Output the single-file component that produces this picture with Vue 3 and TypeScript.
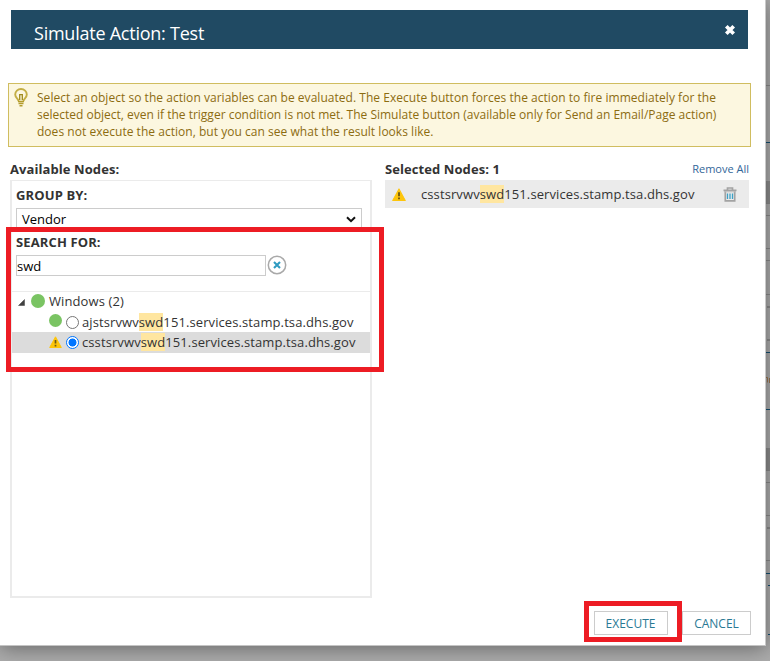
<script setup lang="ts">
import { ref } from 'vue'

interface TreeNode {
  id: number
  status: 'up' | 'warning'
  before: string
  match: string
  after: string
}

const nodes: TreeNode[] = [
  { id: 1, status: 'up', before: 'ajstsrvwv', match: 'swd', after: '151.services.stamp.tsa.dhs.gov' },
  { id: 2, status: 'warning', before: 'csstsrvwv', match: 'swd', after: '151.services.stamp.tsa.dhs.gov' },
]
const selectedId = ref(2)
const search = ref('swd')

const ruleLines = [85, 203, 215, 248, 260, 294, 470, 482, 515, 560]
const accentLines = [142, 352, 409, 573]
</script>

<template>
  <div class="screen">
    <svg class="behind" width="4" height="661" viewBox="0 0 4 661">
      <rect y="181" width="4" height="23" fill="#8d8d8d" />
      <rect y="448" width="4" height="23" fill="#8d8d8d" />
      <rect v-for="y in ruleLines" :key="y" :y="y" width="4" height="1" fill="#8a8a8a" />
      <rect x="1" y="306" width="3" height="2" fill="#8b8b8b" />
      <rect x="1" y="339" width="3" height="2" fill="#8b8b8b" />
      <rect x="1" y="527" width="3" height="2" fill="#8b8b8b" />
      <rect v-for="y in accentLines" :key="y" :y="y" width="4" height="1" fill="#144f71" />
      <rect x="2" y="585" width="2" height="1" fill="#144f71" />
      <rect x="2" y="634" width="2" height="1" fill="#144f71" />
      <path d="M0 377.5h1.500v5M3.500 378v5" fill="none" stroke="#9b7650" />
    </svg>

    <section class="dialog">
      <header class="titlebar">
        <h1>Simulate Action: Test</h1>
        <svg class="close" width="12" height="12" viewBox="0 0 12 12">
          <path d="M2.300 2.300l7.400 7.400M9.700 2.300l-7.400 7.400" stroke="#fff" stroke-width="3.700" />
        </svg>
      </header>

      <div class="hint">
        <svg class="bulb" width="14" height="20" viewBox="0 0 14 20" fill="none">
          <path d="M4.500 13.200C4.500 10.500 1.200 10 1.200 6.500a5.800 5.500 0 0 1 11.600 0C12.800 10 9.500 10.500 9.500 13.200" stroke="#c3ae45" stroke-width="1.900" />
          <path d="M5.700 12V6.600h2.600V12" stroke="#a08a1c" stroke-width="1.300" />
          <path d="M4 13.500h6M4.500 15.500h5M5.500 17.700h3" stroke="#b39c2c" stroke-width="1.600" />
        </svg>
        <p>
          <span class="l1">Select an object so the action variables can be evaluated. The Execute button forces the action to fire immediately for the</span><br>
          <span class="l2">selected object, even if the trigger condition is not met. The Simulate button (available only for Send an Email/Page action)</span><br>
          <span class="l3">does not execute the action, but you can see what the result looks like.</span>
        </p>
      </div>

      <div class="columns">
        <div class="available">
          <h2>Available Nodes:</h2>
          <div class="panel">
            <div class="filters">
              <label class="caption">GROUP BY:</label>
              <div class="select">
                <span>Vendor</span>
                <svg width="10" height="7" viewBox="0 0 10 7"><path d="M1 1.200l4 4 4-4" fill="none" stroke="#111" stroke-width="2" /></svg>
              </div>
              <label class="caption second">SEARCH FOR:</label>
              <div class="search">
                <input v-model="search" type="text">
                <svg width="20" height="20" viewBox="0 0 20 20">
                  <circle cx="10" cy="10" r="8.700" fill="#fff" stroke="#a9a9a9" stroke-width="1.500" />
                  <path d="M7 7l6 6M13 7l-6 6" stroke="#2f9bc1" stroke-width="2.100" />
                </svg>
              </div>
            </div>
            <div class="tree">
              <div class="group">
                <svg class="arrow" width="7" height="7" viewBox="0 0 7 7"><path d="M6.500 .5v6h-6z" fill="#404040" stroke="#404040" stroke-width=".5" /></svg>
                <i class="dot big"></i>
                <span class="group-name">Windows (2)</span>
              </div>
              <div v-for="n in nodes" :key="n.id" class="leaf" :class="{ chosen: n.id === selectedId }" @click="selectedId = n.id">
                <span class="status">
                  <i v-if="n.status === 'up'" class="dot"></i>
                  <svg v-else width="13" height="12" viewBox="0 0 13 12">
                    <path d="M6.500 .8L12.300 11.500H.7z" fill="#fdc50c" stroke="#fdc50c" stroke-linejoin="round" />
                    <path d="M6.500 4v3.600M6.500 8.700v1.700" stroke="#6d5812" stroke-width="1.700" />
                  </svg>
                </span>
                <i class="radio"></i>
                <span class="name">{{ n.before }}<mark>{{ n.match }}</mark>{{ n.after }}</span>
              </div>
            </div>
          </div>
        </div>

        <div class="selected">
          <div class="selected-head">
            <h2>Selected Nodes: 1</h2>
            <a>Remove All</a>
          </div>
          <div class="picked">
            <svg width="14" height="13" viewBox="0 0 13 12">
              <path d="M6.500 .8L12.300 11.500H.7z" fill="#fdc50c" stroke="#fdc50c" stroke-linejoin="round" />
              <path d="M6.500 4v3.600M6.500 8.700v1.700" stroke="#6d5812" stroke-width="1.700" />
            </svg>
            <span class="name">csstsrvwv<mark>swd</mark>151.services.stamp.tsa.dhs.gov</span>
            <svg class="trash" width="14" height="15" viewBox="0 0 14 15" fill="none">
              <path d="M4.500 2.500V1h5v1.500M.5 3.300h13M2.300 4v9.800h9.400V4" stroke="#a3a3a3" stroke-width="1.700" />
              <path d="M1.500 4.800h11" stroke="#bcbcbc" />
              <path d="M4.500 6.500v5.500M7 6.500v5.500M9.500 6.500v5.500" stroke="#3da1c6" stroke-width="1.300" />
            </svg>
          </div>
        </div>
      </div>

      <footer class="actions">
        <button class="execute">EXECUTE</button>
        <button class="cancel">CANCEL</button>
      </footer>
    </section>

    <div class="mark-box search-mark"></div>
    <div class="mark-box execute-mark"></div>
  </div>
</template>

<style>
body { margin: 0; overflow: hidden; }
</style>

<style scoped>
* { box-sizing: border-box; }
.screen {
  position: relative;
  width: 770px;
  height: 661px;
  overflow: hidden;
  background: #acacac;
  font-family: "Open Sans", "Noto Sans", sans-serif;
  font-size: 13px;
  color: #333;
}
.behind { position: absolute; left: 766px; top: 0; }
.dialog {
  position: relative;
  display: flex;
  flex-direction: column;
  width: 766px;
  height: 646px;
  padding: 10px 0 10px;
  background: #fff;
  border-right: 1px solid #c9c9c9;
  border-bottom: 1px solid #c4c4c4;
  box-shadow: 0 2px 20px rgba(0, 0, 0, .42);
}
.titlebar {
  display: flex;
  justify-content: space-between;
  width: 737px;
  height: 39px;
  margin-left: 11px;
  padding: 0 12px 0 23px;
  background: #204a63;
}
h1 {
  margin: 0;
  padding-top: 8px;
  font-size: 18px;
  line-height: 30px;
  font-weight: 400;
  letter-spacing: -.24px;
  color: #fff;
  white-space: nowrap;
}
.close { margin-top: 14px; }
.hint {
  display: flex;
  width: 743px;
  height: 64px;
  margin: 34px 0 0 8px;
  padding: 4px 0 0 5px;
  border: 1px solid #d0bd60;
  background: #fcf7e0;
  color: #8c6c10;
}
.bulb { flex: none; }
.hint p {
  margin: 1px 0 0 9px;
  font-size: 12px;
  line-height: 17px;
  white-space: nowrap;
}
.l1 { letter-spacing: .036px; }
.l3 { letter-spacing: .03px; }
.columns {
  display: flex;
  margin: 13px 0 0 10px;
}
h2 {
  margin: 0;
  font-size: 13px;
  line-height: 18px;
  font-weight: 700;
  letter-spacing: .08px;
  color: #333;
  white-space: nowrap;
}
.available { width: 375px; }
.panel {
  width: 362px;
  height: 418px;
  margin-top: 2px;
  border: 2px solid #ebebeb;
  border-top-width: 1px;
}
.filters { height: 110px; padding: 5px 0 0 4px; }
.caption {
  display: block;
  height: 22px;
  font-size: 13px;
  line-height: 18px;
  font-weight: 700;
  letter-spacing: .12px;
}
.select {
  display: flex;
  align-items: center;
  justify-content: space-between;
  width: 346px;
  height: 22px;
  padding: 0 5px 0 5px;
  border: 1px solid #ccc;
  color: #000;
}
.second { height: 22px; margin-top: 3px; }
.search { display: flex; gap: 1px; }
input {
  width: 250px;
  height: 21px;
  padding: 0;
  border: 1px solid #ccc;
  font: inherit;
  color: #000;
  outline: none;
}
.tree { border-top: 1px solid #ebebeb; }
.group {
  display: flex;
  align-items: center;
  height: 20px;
  padding-left: 6px;
  white-space: nowrap;
}
.group-name { margin-top: -2px; letter-spacing: .1px; }
.arrow { margin-top: 1px; }
.dot {
  display: block;
  width: 13px;
  height: 13px;
  border-radius: 50%;
  background: #7ac463;
}
.dot.big { width: 14px; height: 14px; margin: -3px 4px 0 6px; }
.leaf {
  display: flex;
  align-items: center;
  height: 20px;
  padding-left: 37px;
  white-space: nowrap;
}
.leaf.chosen { height: 21px; background: #dcdcdc; }
.chosen .name { margin-top: -1px; }
.chosen .status { margin-top: -1px; }
.status { display: flex; width: 17px; }
.leaf .dot { margin-top: -3px; }
.radio {
  width: 13px;
  height: 13px;
  margin-right: 3px;
  border: 1px solid #767676;
  border-radius: 50%;
  background: #fff;
}
.chosen .radio {
  border-color: #0075ff;
  background: radial-gradient(circle, #0075ff 0 3.700px, #fff 4.300px);
}
.name { letter-spacing: .1px; }
mark { padding: 0; background: #ffe6a0; color: inherit; }
.selected { width: 364px; }
.selected-head { display: flex; justify-content: space-between; }
.selected-head a { font-size: 11px; line-height: 18px; color: #336699; }
.picked {
  display: flex;
  align-items: center;
  height: 28px;
  margin-top: 2px;
  padding: 0 12px 0 7px;
  background: #ebebeb;
  white-space: nowrap;
}
.picked .name { margin-left: 15px; }
.trash { margin-left: auto; }
.actions {
  display: flex;
  justify-content: flex-end;
  gap: 14px;
  margin-top: auto;
  padding-right: 14px;
}
button {
  height: 24px;
  padding: 1px 0 0;
  border: 1px solid #ccc;
  background: #fff;
  font: 12px/22px "Open Sans", sans-serif;
  color: #297994;
}
.execute { width: 74px; padding-right: 1px; }
.cancel { width: 69px; }
.mark-box { position: absolute; border: 5px solid #ed1c24; pointer-events: none; }
.search-mark { left: 6px; top: 227px; width: 378px; height: 145px; }
.execute-mark { left: 584px; top: 601px; width: 98px; height: 41px; }
</style>
